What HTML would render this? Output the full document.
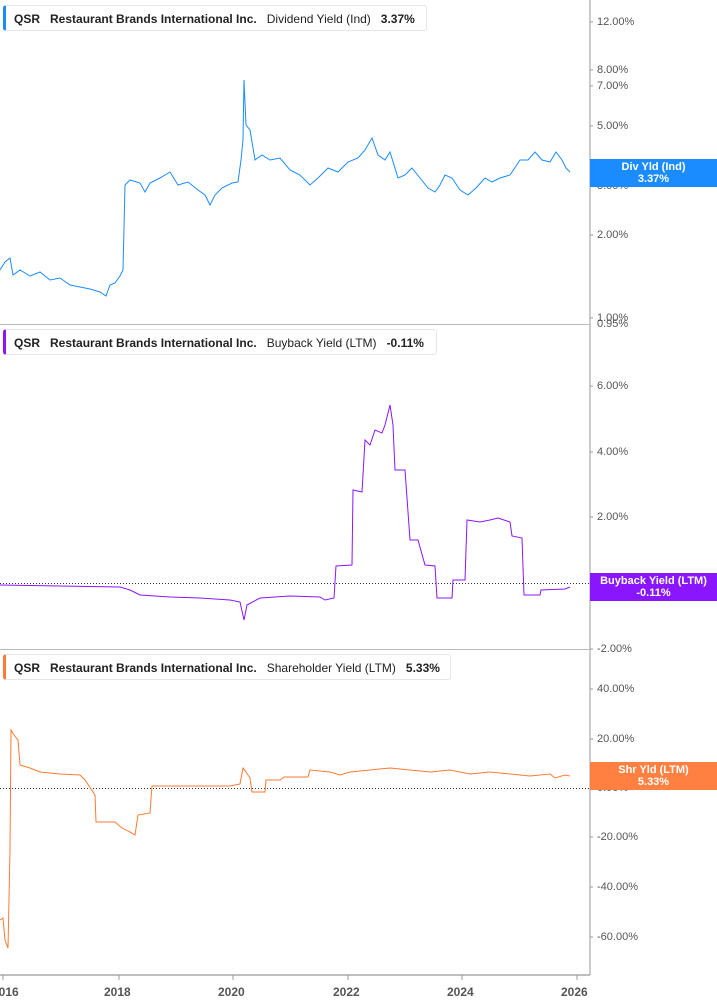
<!DOCTYPE html>
<html><head><meta charset="utf-8"><style>
body{margin:0;width:717px;height:1005px;background:#fff;overflow:hidden;font-family:"Liberation Sans",sans-serif;position:relative}
.leg{position:absolute;left:3px;height:26px;border:1px solid #e6e6e6;border-left:3px solid;border-radius:3px;background:#fff;font-size:12px;font-weight:bold;color:#222;line-height:26px;padding-left:8px;box-sizing:border-box;white-space:nowrap}
.leg span{margin-right:10px}.leg .n{font-weight:normal}
.t{position:absolute;left:597px;font-size:11px;color:#555;line-height:12px}
.badge{position:absolute;left:590px;width:127px;color:#fff;font-size:11px;font-weight:bold;text-align:center;line-height:12px;padding:2px 0}
.yr{position:absolute;top:985px;font-size:12px;font-weight:bold;color:#555}
</style></head><body>
<svg width="717" height="1005" style="position:absolute;left:0;top:0">
<g stroke="#999" fill="none" stroke-width="1">
<line x1="590" y1="0" x2="590" y2="975"/>
<line x1="0" y1="324.5" x2="590" y2="324.5" stroke="#bbb"/>
<line x1="0" y1="649.5" x2="590" y2="649.5" stroke="#bbb"/>
<line x1="0" y1="975" x2="590" y2="975" stroke="#aaa" stroke-width="1.5"/>
<path d="M3 975v5M119 975v5M233 975v5M348 975v5M462 975v5M577 975v5"/>
<path d="M590 22h3M590 70h3M590 86h3M590 126h3M590 186h3M590 235h3M590 318h3M590 386h3M590 452h3M590 517h3M590 649h3M590 689h3M590 739h3M590 788h3M590 837h3M590 887h3M590 937h3"/>
</g>
<g stroke="#333" stroke-dasharray="1,2"><line x1="0" y1="583.5" x2="590" y2="583.5"/><line x1="0" y1="788.5" x2="590" y2="788.5"/></g>
<polyline fill="none" stroke="#1a8cff" stroke-width="1" points="0,270 5,262 10,258 13,275 20,270 30,276 40,272 50,280 60,278 70,285 80,287 90,289 100,292 106,296 110,285 115,283 120,276 123,270 125,185 130,180 140,183 145,192 150,183 160,178 170,172 178,185 188,182 198,190 205,195 210,205 215,195 222,188 232,183 238,182 241,160 243,140 244,80 246,125 250,130 255,160 262,155 270,160 280,158 290,170 300,175 310,185 318,178 328,168 338,172 348,162 358,158 365,150 372,138 378,155 385,160 390,152 398,178 405,175 412,168 420,178 428,188 435,192 440,185 445,175 452,178 460,190 468,195 476,188 485,178 492,182 500,178 510,175 520,160 528,160 535,152 542,160 550,162 556,152 562,160 566,168 570,172"/>
<polyline fill="none" stroke="#8a16ff" stroke-width="1" points="0,585 60,586 120,587 130,590 140,595 170,597 200,598 230,600 240,602 244,620 247,605 260,598 290,596 320,597 325,600 334,598 336,566 352,565 353,490 362,492 365,440 370,445 375,430 382,433 385,425 390,405 393,425 395,470 405,470 410,540 418,540 425,565 435,566 437,598 452,598 453,580 465,580 467,520 480,522 490,520 498,518 510,522 512,536 522,538 524,595 540,595 541,590 565,589 570,587"/>
<polyline fill="none" stroke="#ff7a33" stroke-width="1" points="0,920 3,918 5,940 8,948 10,850 11,730 14,735 18,740 20,765 30,768 40,772 60,774 80,775 85,780 95,795 96,822 115,822 122,828 130,832 135,835 138,815 150,813 152,786 200,786 230,786 240,784 243,768 246,772 250,778 252,792 265,792 266,780 280,780 284,777 308,777 310,770 330,772 340,775 350,772 370,770 390,768 410,770 430,772 450,770 470,774 490,772 510,774 530,776 550,774 555,778 565,775 570,776"/>
</svg>
<div class="leg" style="top:5px;width:424px;border-left-color:#1a8cff"><span>QSR</span><span>Restaurant Brands International Inc.</span><span class="n">Dividend Yield (Ind)</span><span>3.37%</span></div>
<div class="leg" style="top:329px;width:434px;border-left-color:#8a16ff"><span>QSR</span><span>Restaurant Brands International Inc.</span><span class="n">Buyback Yield (LTM)</span><span>-0.11%</span></div>
<div class="leg" style="top:654px;width:448px;border-left-color:#ff7a33"><span>QSR</span><span>Restaurant Brands International Inc.</span><span class="n">Shareholder Yield (LTM)</span><span>5.33%</span></div>
<div class="t" style="top:16px">12.00%</div><div class="t" style="top:64px">8.00%</div><div class="t" style="top:80px">7.00%</div><div class="t" style="top:120px">5.00%</div><div class="t" style="top:180px">3.00%</div><div class="t" style="top:229px">2.00%</div><div class="t" style="top:312px">1.00%</div><div class="t" style="top:318px">0.95%</div>
<div class="t" style="top:380px">6.00%</div><div class="t" style="top:446px">4.00%</div><div class="t" style="top:511px">2.00%</div><div class="t" style="top:643px">-2.00%</div>
<div class="t" style="top:683px">40.00%</div><div class="t" style="top:733px">20.00%</div><div class="t" style="top:782px">0.00%</div><div class="t" style="top:831px">-20.00%</div><div class="t" style="top:881px">-40.00%</div><div class="t" style="top:931px">-60.00%</div>
<div class="badge" style="top:159px;background:#1a8cff">Div Yld (Ind)<br>3.37%</div>
<div class="badge" style="top:573px;background:#8a16ff">Buyback Yield (LTM)<br>-0.11%</div>
<div class="badge" style="top:762px;background:#ff8040">Shr Yld (LTM)<br>5.33%</div>
<div class="yr" style="left:-8px">2016</div><div class="yr" style="left:104px">2018</div><div class="yr" style="left:218px">2020</div><div class="yr" style="left:333px">2022</div><div class="yr" style="left:447px">2024</div><div class="yr" style="left:561px">2026</div>
</body></html>
